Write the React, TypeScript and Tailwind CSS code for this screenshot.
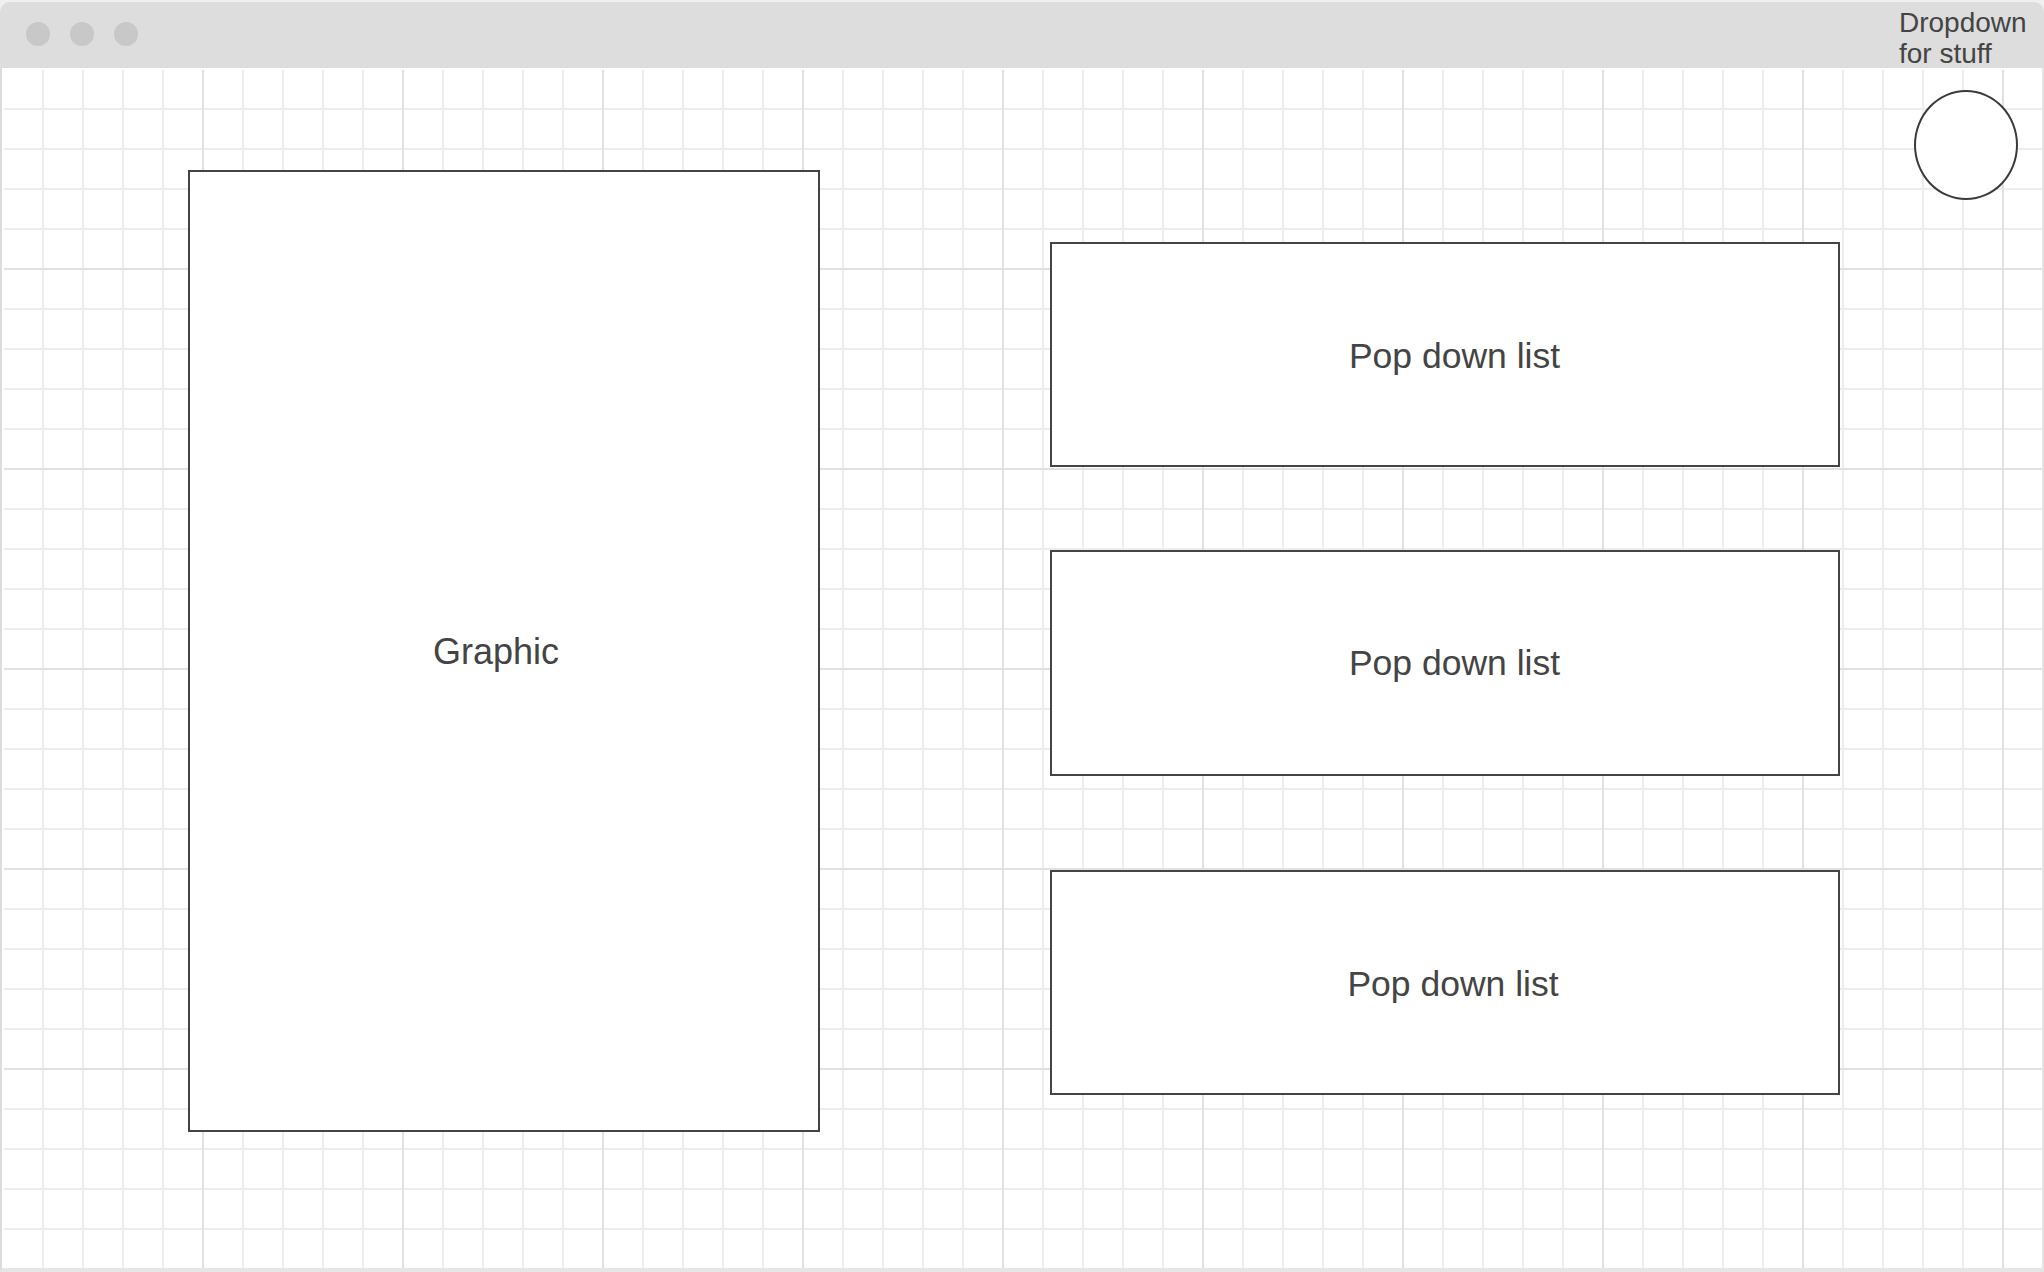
export default function App() {
  return (
    <div className="w-[2044px] h-[1272px] bg-[#f0f0f0] pt-[2px] overflow-hidden font-['Liberation_Sans',Arial,sans-serif] text-[#444444]">
      <div className="flex flex-col w-[2044px]">
        {/* title bar */}
        <div className="h-[66px] bg-[#dddddd] rounded-t-[10px] flex items-start pl-[26px]">
          <div className="flex gap-[20px] mt-[20px]">
            <div className="w-[24px] h-[24px] rounded-full bg-[#c8c8c8]" />
            <div className="w-[24px] h-[24px] rounded-full bg-[#c8c8c8]" />
            <div className="w-[24px] h-[24px] rounded-full bg-[#c8c8c8]" />
          </div>
          <div className="ml-auto w-[145px] mt-[5px] text-[28px] leading-[31px] whitespace-nowrap">
            Dropdown
            <br />
            for stuff
          </div>
        </div>
        {/* canvas */}
        <div className="h-[1204px] bg-white border-l-2 border-r-2 border-b-4 border-l-[#dcdcdc] border-r-[#e4e4e4] border-b-[#e6e6e6]">
          <div className="h-[1200px] pt-[2px] pl-[2px] flex items-start bg-clip-content bg-origin-content bg-[linear-gradient(to_right,transparent_198px,#e1e1e1_198px),linear-gradient(to_bottom,transparent_198px,#e1e1e1_198px),linear-gradient(to_right,transparent_38px,#ededed_38px),linear-gradient(to_bottom,transparent_38px,#ededed_38px)] bg-[length:200px_200px,200px_200px,40px_40px,40px_40px]">
            <div className="ml-[184px] mt-[100px] w-[632px] h-[962px] bg-white border-2 border-[#444444] flex items-center justify-center pr-[16px] pt-[2px]">
              <span className="text-[36px]">Graphic</span>
            </div>
            <div className="ml-[230px] mt-[172px] flex flex-col">
              <div className="w-[790px] h-[225px] bg-white border-2 border-[#444444] flex items-center justify-center pl-[19px] pt-[4px]">
                <span className="text-[35.5px]">Pop down list</span>
              </div>
              <div className="mt-[83px] w-[790px] h-[226px] bg-white border-2 border-[#444444] flex items-center justify-center pl-[19px] pt-[2px]">
                <span className="text-[35.5px]">Pop down list</span>
              </div>
              <div className="mt-[94px] w-[790px] h-[225px] bg-white border-2 border-[#444444] flex items-center justify-center pl-[16px] pt-[4px]">
                <span className="text-[35.5px]">Pop down list</span>
              </div>
            </div>
            <div className="ml-[74px] mt-[20px] w-[104px] h-[110px] rounded-[50%] bg-white border-2 border-[#3a3a3a]" />
          </div>
        </div>
      </div>
    </div>
  );
}
